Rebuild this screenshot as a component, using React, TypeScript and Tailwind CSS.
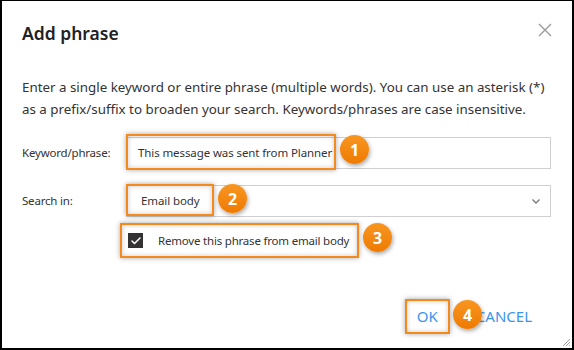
import { Check } from "lucide-react";

function Badge({ n, className }: { n: number; className: string }) {
  return (
    <div
      className={`absolute flex h-[29px] w-[29px] items-center justify-center rounded-full bg-gradient-to-b from-[#f8961f] to-[#ee7a00] text-[16px] font-bold text-white shadow-[1px_2px_4px_rgba(0,0,0,0.35)] ${className}`}
    >
      {n}
    </div>
  );
}

const hl =
  "border-2 border-[#f28a1e] shadow-[0_0_5px_rgba(0,0,0,0.35),inset_0_0_5px_rgba(0,0,0,0.22)]";

export default function App() {
  return (
    <div className="relative h-[350px] w-[574px] border-2 border-t border-black bg-white font-['Noto_Sans',sans-serif] text-[#333]">
      {/* header */}
      <div className="flex items-start justify-between pl-[20px] pr-[20px] pt-[20px]">
        <h2 className="text-[17.5px] font-semibold leading-[24px] text-[#222]">Add phrase</h2>
        <svg width="14" height="14" viewBox="0 0 14 14" className="mt-[2px]">
          <path d="M1 1L13 13M13 1L1 13" stroke="#9a9a9a" strokeWidth="1.4" fill="none" />
        </svg>
      </div>

      <p className="mt-[31px] px-[20px] text-[13.35px] leading-[22px]">
        Enter a single keyword or entire phrase (multiple words). You can use an asterisk (*) as a
        prefix/suffix to broaden your search. Keywords/phrases are case insensitive.
      </p>

      {/* keyword */}
      <div className="mt-[17px] flex items-center pl-[20px] pr-[21px] text-[11.5px]">
        <label className="w-[104px] tracking-[-0.2px]">Keyword/phrase:</label>
        <div className="relative flex-1">
          <div className="flex h-[32px] items-center whitespace-nowrap border border-[#cfcfcf] pl-[11px] tracking-[-0.1px]">
            This message was sent from Planner
          </div>
          <div className={`absolute left-0 top-[-3px] h-[36px] w-[210px] ${hl}`} />
        </div>
      </div>

      {/* search in */}
      <div className="mt-[16px] flex items-center pl-[20px] pr-[21px] text-[11.5px]">
        <label className="w-[104px] tracking-[-0.2px]">Search in:</label>
        <div className="relative flex-1">
          <div className="flex h-[32px] items-center justify-between border border-[#cfcfcf] pl-[14px] pr-[10px] tracking-[-0.1px]">
            <span>Email body</span>
            <svg width="8" height="5" viewBox="0 0 8 5">
              <path d="M0.5 0.5L4 4L7.5 0.5" stroke="#777" strokeWidth="1.3" fill="none" />
            </svg>
          </div>
          <div className={`absolute left-0 top-[-1px] h-[32px] w-[88px] ${hl}`} />
        </div>
      </div>

      {/* checkbox */}
      <div className="mt-[6px] pl-[118px]">
        <div className={`inline-flex h-[35px] w-[239px] items-center whitespace-nowrap pl-[6px] text-[11.5px] tracking-[-0.2px] ${hl}`}>
          <span className="flex h-[15px] w-[15px] items-center justify-center bg-[#333]">
            <Check size={12} strokeWidth={3} color="#fff" />
          </span>
          <span className="ml-[15px]">Remove this phrase from email body</span>
        </div>
      </div>

      {/* buttons */}
      <div className="mt-[41px] flex items-center justify-end pr-[40px] text-[15px] text-[#3a95ec]">
        <button className={`flex h-[35px] w-[45px] items-center justify-center ${hl}`}>OK</button>
        <button className="ml-[26px]">CANCEL</button>
      </div>

      <Badge n={1} className="left-[338px] top-[134px]" />
      <Badge n={2} className="left-[216px] top-[183px]" />
      <Badge n={3} className="left-[361px] top-[222px]" />
      <Badge n={4} className="left-[451px] top-[299px]" />

      {/* resize grip */}
      <svg width="9" height="9" viewBox="0 0 9 9" className="absolute bottom-[1px] right-[1px]">
        <path d="M8 1L1 8M8 4L4 8M8 7L7 8" stroke="#888" strokeWidth="0.8" />
      </svg>
    </div>
  );
}
